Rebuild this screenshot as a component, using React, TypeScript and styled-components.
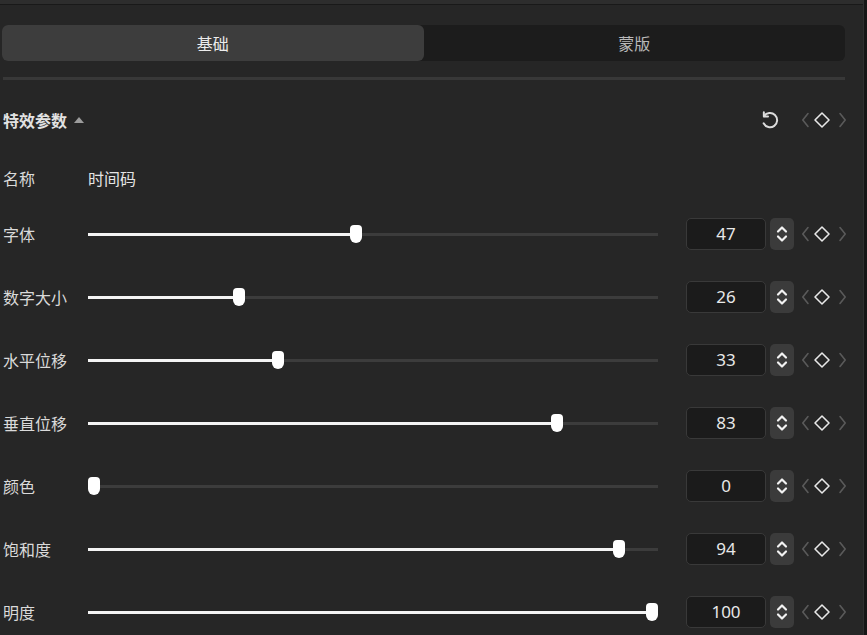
import styled, { createGlobalStyle } from 'styled-components';
import { useState } from 'react';

const GlobalStyle = createGlobalStyle`
  html, body {
    margin: 0;
    padding: 0;
    background: #262626;
    overflow: hidden;
  }
  body {
    font-family: "Noto Sans", "Noto Sans CJK SC", sans-serif;
    color: #dedede;
  }
`;

interface Param {
  label: string;
  value: number;
}

const params: Param[] = [
  { label: '字体', value: 47 },
  { label: '数字大小', value: 26 },
  { label: '水平位移', value: 33 },
  { label: '垂直位移', value: 83 },
  { label: '颜色', value: 0 },
  { label: '饱和度', value: 94 },
  { label: '明度', value: 100 },
];

const Shell = styled.div`
  display: flex;
  width: 867px;
  height: 635px;
  overflow: hidden;
  background: #262626;
`;

const Panel = styled.div`
  flex: 1;
  display: flex;
  flex-direction: column;
  min-width: 0;

  & > * {
    flex-shrink: 0;
  }
`;

const TopEdge = styled.div`
  height: 4px;
  background: #2d2d2d;
  border-bottom: 1px solid #191919;
`;

const ScrollStrip = styled.div`
  width: 3px;
  background: #161616;
  border-left: 1px solid #2f2f2f;
`;

const Tabs = styled.div`
  display: flex;
  height: 36px;
  margin: 20px 18px 0 2px;
  background: #1c1c1c;
  border-radius: 6px;
`;

const Tab = styled.button<{ $active: boolean }>`
  flex: 1;
  border: none;
  border-radius: 6px;
  background: ${p => (p.$active ? '#3d3d3d' : 'transparent')};
  color: ${p => (p.$active ? '#ececec' : '#b9b9b9')};
  font-family: "Noto Sans CJK SC", sans-serif;
  font-size: 16px;
  cursor: pointer;
  padding: 0;
`;

const Divider = styled.div`
  height: 3px;
  margin: 16px 18px 0 3px;
  background: #383838;
`;

const Body = styled.div`
  display: flex;
  flex-direction: column;
  padding: 0 13px 0 3px;

  & > * {
    flex-shrink: 0;
  }
`;

const HeaderRow = styled.div`
  display: flex;
  align-items: center;
  height: 40px;
  margin-top: 20px;
`;

const Title = styled.span`
  font-family: "Noto Sans CJK SC", sans-serif;
  font-weight: 700;
  font-size: 16px;
  color: #e2e2e2;
`;

const Caret = styled.span`
  width: 0;
  height: 0;
  margin-left: 7px;
  border-left: 5px solid transparent;
  border-right: 5px solid transparent;
  border-bottom: 6px solid #9c9c9c;
`;

const Spacer = styled.div`
  flex: 1;
`;

const ResetButton = styled.button`
  width: 24px;
  height: 24px;
  margin-right: 12px;
  padding: 0;
  border: none;
  background: none;
  display: flex;
  align-items: center;
  justify-content: center;
  color: #dcdcdc;
`;

const NameRow = styled.div`
  display: flex;
  align-items: center;
  height: 36px;
  margin-top: 20px;
  margin-bottom: 6px;
`;

const Label = styled.span`
  width: 85px;
  flex-shrink: 0;
  font-family: "Noto Sans CJK SC", sans-serif;
  font-size: 16px;
  color: #dadada;
`;

const NameValue = styled.span`
  font-family: "Noto Sans CJK SC", sans-serif;
  font-size: 16px;
  color: #e4e4e4;
`;

const ParamRow = styled.div`
  display: flex;
  align-items: center;
  height: 63px;
`;

const Track = styled.div`
  position: relative;
  flex: 1;
  height: 18px;
  margin-right: 28px;

  &::before {
    content: '';
    position: absolute;
    left: 0;
    right: 0;
    top: 8px;
    height: 3px;
    background: #3c3c3c;
  }
`;

const Fill = styled.div`
  position: absolute;
  left: 0;
  top: 8px;
  height: 3px;
  background: #f4f4f4;
`;

const Thumb = styled.div`
  position: absolute;
  top: 0;
  width: 12px;
  height: 18px;
  background: #ffffff;
  border-radius: 4px 4px 6px 6px;
`;

const NumberBox = styled.div`
  width: 78px;
  height: 30px;
  border: 1px solid #393939;
  border-radius: 5px;
  background: #1b1b1b;
  display: flex;
  align-items: center;
  justify-content: center;
  font-family: "Noto Sans", sans-serif;
  font-size: 17px;
  color: #e8e8e8;
`;

const Stepper = styled.div`
  width: 24px;
  height: 32px;
  margin-left: 4px;
  border-radius: 5px;
  background: #3b3b3b;
  display: flex;
  align-items: center;
  justify-content: center;
`;

const KeyNav = styled.div`
  display: flex;
  align-items: center;
  margin-left: 3px;
`;

const NavSlot = styled.span<{ $w: number; $gap?: number }>`
  width: ${p => p.$w}px;
  height: 20px;
  margin-left: ${p => p.$gap ?? 0}px;
  display: flex;
  align-items: center;
  justify-content: center;
`;

const Chevron = ({ dir }: { dir: 'left' | 'right' }) => (
  <svg width="9" height="16" viewBox="0 0 9 16" fill="none">
    <path
      d={dir === 'left' ? 'M7 1.5 1.8 8 7 14.5' : 'M2 1.5 7.2 8 2 14.5'}
      stroke="#5a5a5a"
      strokeWidth="1.6"
      strokeLinecap="round"
      strokeLinejoin="round"
    />
  </svg>
);

const Diamond = () => (
  <svg width="20" height="20" viewBox="0 0 20 20" fill="none">
    <path d="M10 2.2 17.8 10 10 17.8 2.2 10Z" stroke="#e8e8e8" strokeWidth="1.7" strokeLinejoin="round" />
  </svg>
);

const KeyframeNav = () => (
  <KeyNav>
    <NavSlot $w={16}><Chevron dir="left" /></NavSlot>
    <NavSlot $w={18}><Diamond /></NavSlot>
    <NavSlot $w={16} $gap={3}><Chevron dir="right" /></NavSlot>
  </KeyNav>
);

const ResetIcon = () => (
  <svg width="22" height="22" viewBox="0 0 20 20" fill="none">
    <path
      d="M4.6 6.5A6.5 6.5 0 1 1 4.2 13"
      stroke="#dcdcdc"
      strokeWidth="1.8"
      strokeLinecap="round"
    />
    <path d="M4.4 3v3.8h3.8" stroke="#dcdcdc" strokeWidth="1.8" strokeLinecap="round" strokeLinejoin="round" />
  </svg>
);

const StepperIcon = () => (
  <svg width="12" height="22" viewBox="0 0 12 22" fill="none">
    <path d="M2 8.5 6 4.5l4 4" stroke="#f2f2f2" strokeWidth="2.2" strokeLinecap="round" strokeLinejoin="round" />
    <path d="M2 13.5 6 17.5l4-4" stroke="#f2f2f2" strokeWidth="2.2" strokeLinecap="round" strokeLinejoin="round" />
  </svg>
);

const SliderRow = ({ label, value }: Param) => {
  const t = value / 100;
  return (
    <ParamRow>
      <Label>{label}</Label>
      <Track>
        <Fill style={{ width: `calc((100% - 12px) * ${t} + 6px)` }} />
        <Thumb style={{ left: `calc((100% - 12px) * ${t})` }} />
      </Track>
      <NumberBox>{value}</NumberBox>
      <Stepper><StepperIcon /></Stepper>
      <KeyframeNav />
    </ParamRow>
  );
};

const App = () => {
  const [tab, setTab] = useState(0);

  return (
    <Shell>
      <GlobalStyle />
      <Panel>
        <TopEdge />
        <Tabs>
          <Tab $active={tab === 0} onClick={() => setTab(0)}>基础</Tab>
          <Tab $active={tab === 1} onClick={() => setTab(1)}>蒙版</Tab>
        </Tabs>
        <Divider />
        <Body>
          <HeaderRow>
            <Title>特效参数</Title>
            <Caret />
            <Spacer />
            <ResetButton><ResetIcon /></ResetButton>
            <KeyframeNav />
          </HeaderRow>
          <NameRow>
            <Label>名称</Label>
            <NameValue>时间码</NameValue>
          </NameRow>
          {params.map(p => (
            <SliderRow key={p.label} {...p} />
          ))}
        </Body>
      </Panel>
      <ScrollStrip />
    </Shell>
  );
};

export default App;
